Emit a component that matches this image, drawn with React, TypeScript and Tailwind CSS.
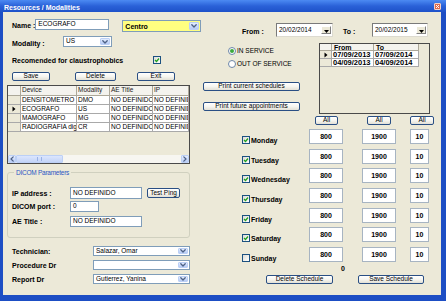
import React from "react";

type Kids = { className?: string; children?: React.ReactNode };

function Chev({ dir = "down" }: { dir?: "down" | "left" | "right" }) {
  if (dir === "down")
    return (
      <svg width="6" height="4" viewBox="0 0 6 4">
        <path d="M0.8 0.8 L3 3 L5.2 0.8" stroke="#4D6185" strokeWidth="1.3" fill="none" strokeLinecap="round" strokeLinejoin="round" />
      </svg>
    );
  const d = dir === "left" ? "M3.2 0.8 L1 3 L3.2 5.2" : "M0.8 0.8 L3 3 L0.8 5.2";
  return (
    <svg width="4" height="6" viewBox="0 0 4 6">
      <path d={d} stroke="#4D6185" strokeWidth="1.2" fill="none" strokeLinecap="round" strokeLinejoin="round" />
    </svg>
  );
}

function Lbl({ className = "", children }: Kids) {
  return <div className={`text-[7px] font-bold leading-none whitespace-nowrap ${className}`}>{children}</div>;
}

function Combo({ className = "", text = "", bold = false, yellow = false }: { className?: string; text?: string; bold?: boolean; yellow?: boolean }) {
  return (
    <div className={`flex border border-[#7F9DB9] ${yellow ? "bg-[#FFFF80]" : "bg-white"} ${className}`}>
      <div className={`flex-1 flex items-center pl-[2px] leading-none whitespace-nowrap overflow-hidden ${bold ? "font-bold text-[7px]" : "text-[6.5px]"}`}>
        {text}
      </div>
      <div className="w-[10px] my-[1px] mr-[1px] rounded-[1px] border border-[#BCD0F6] bg-gradient-to-b from-[#E4EDFE] to-[#B5CAF5] flex items-center justify-center">
        <Chev />
      </div>
    </div>
  );
}

function DateBox({ className = "", text }: { className?: string; text: string }) {
  return (
    <div className={`flex bg-white border border-t-[#7A7A7A] border-l-[#7A7A7A] border-r-[#DCDAD0] border-b-[#DCDAD0] ${className}`}>
      <div className="flex-1 pl-[2px] pt-[3px] text-[6.5px] leading-none whitespace-nowrap">{text}</div>
      <div className="w-[10px] my-[2px] mr-[1px] bg-[#ECE9D8] border border-t-white border-l-white border-r-[#808080] border-b-[#808080] flex items-center justify-center pt-[2px]">
        <svg width="5" height="3" viewBox="0 0 5 3">
          <path d="M0 0 H5 L2.5 3Z" fill="#000" />
        </svg>
      </div>
    </div>
  );
}

function Btn({ className = "", children }: Kids) {
  return (
    <div className={`flex items-center justify-center rounded-[2px] border border-[#2A4F84] bg-gradient-to-b from-white via-[#F6F5F0] to-[#E2E0D6] text-[6.5px] leading-none whitespace-nowrap ${className}`}>
      {children}
    </div>
  );
}

function Check({ checked }: { checked: boolean }) {
  return (
    <div className="w-[8px] h-[8px] shrink-0 border border-[#1C5180] bg-gradient-to-br from-[#DCDCD7] to-white flex items-center justify-center">
      {checked && (
        <svg width="6" height="6" viewBox="0 0 6 6">
          <path d="M1 3 L2.5 4.5 L5 1.5" stroke="#21A121" strokeWidth="1.3" fill="none" />
        </svg>
      )}
    </div>
  );
}

function Radio({ checked }: { checked: boolean }) {
  return (
    <div className="w-[8px] h-[8px] shrink-0 rounded-full border border-[#6D87A8] bg-white flex items-center justify-center">
      {checked && <div className="w-[4px] h-[4px] rounded-full bg-[#3DA93D]" />}
    </div>
  );
}

function Field({ className = "", children }: Kids) {
  return (
    <div className={`flex items-center bg-white border border-[#7F9DB9] pl-[2px] text-[6.5px] leading-none whitespace-nowrap overflow-hidden ${className}`}>
      {children}
    </div>
  );
}

function Arrow() {
  return (
    <svg width="4" height="6" viewBox="0 0 4 6">
      <path d="M0.5 0.5 L3.5 3 L0.5 5.5Z" fill="#000" />
    </svg>
  );
}

const devices = [
  ["DENSITOMETRO", "DMO", false],
  ["ECOGRAFO", "US", true],
  ["MAMOGRAFO", "MG", false],
  ["RADIOGRAFIA dig", "CR", false],
] as const;

function DeviceGrid() {
  const hc = "h-full flex items-center pl-[1px] border-r border-b border-[#ACA899] bg-[#F4F3EE] text-[6.5px] leading-none text-[#222] whitespace-nowrap overflow-hidden";
  const dc = "h-full flex items-center pl-[1px] border-r border-b border-[#A9A9A9] bg-white text-[6.5px] leading-none whitespace-nowrap overflow-hidden";
  return (
    <div className="mt-[4px] w-[183px] h-[79px] border border-[#4A4A4A] bg-[#ECE9D8] flex flex-col overflow-hidden">
      <div className="flex h-[10px]">
        <div className={`${hc} w-[13px]`} />
        <div className={`${hc} w-[56px]`}>Device</div>
        <div className={`${hc} w-[33px]`}>Modality</div>
        <div className={`${hc} w-[43px]`}>AE Title</div>
        <div className={`${hc} flex-1`}>IP</div>
      </div>
      {devices.map(([d, m, cur]) => (
        <div key={d} className="flex h-[9px]">
          <div className="w-[13px] h-full flex items-center justify-center border-r border-b border-[#A9A9A9] bg-[#ECE9D8]">{cur && <Arrow />}</div>
          <div className={`${dc} w-[56px]`}>{d}</div>
          <div className={`${dc} w-[33px]`}>{m}</div>
          <div className={`${dc} w-[43px]`}>NO DEFINIDO</div>
          <div className={`${dc} flex-1`}>NO DEFINIDO</div>
        </div>
      ))}
      <div className="flex-1" />
      <div className="flex h-[8px] bg-[#F7F6F1]">
        <div className="w-[8px] h-full rounded-[1px] border border-[#BCD0F6] bg-gradient-to-b from-[#E4EDFE] to-[#BACDF6] flex items-center justify-center">
          <Chev dir="left" />
        </div>
        <div className="w-[47px] h-full rounded-[1px] border border-[#BCD0F6] bg-gradient-to-b from-[#DCE6FD] to-[#C3D4F8] flex items-center justify-center">
          <div className="w-[5px] h-[4px] border-l border-r border-[#9AB2E6]" />
        </div>
        <div className="flex-1" />
        <div className="w-[8px] h-full rounded-[1px] border border-[#BCD0F6] bg-gradient-to-b from-[#E4EDFE] to-[#BACDF6] flex items-center justify-center">
          <Chev dir="right" />
        </div>
      </div>
    </div>
  );
}

function ScheduleGrid() {
  const hc = "h-full flex items-center pl-[2px] border-r border-b border-[#ACA899] bg-[#F4F3EE] text-[7px] font-bold leading-none";
  const dc = "h-full flex items-center pl-[1px] border-r border-b border-[#A9A9A9] bg-white text-[7.5px] font-bold leading-none whitespace-nowrap";
  const rows = [
    ["07/09/2013", "07/09/2014", true],
    ["04/09/2013", "04/09/2014", false],
  ] as const;
  return (
    <div className="w-[111px] h-[71px] border border-[#4A4A4A] bg-[#ECE9D8] flex flex-col overflow-hidden">
      <div className="flex h-[7px]">
        <div className={`${hc} w-[12px]`} />
        <div className={`${hc} w-[42px]`}>From</div>
        <div className={`${hc} w-[45px]`}>To</div>
      </div>
      {rows.map(([a, b, cur]) => (
        <div key={a} className="flex h-[8px]">
          <div className="w-[12px] h-full flex items-center justify-center border-r border-b border-[#A9A9A9] bg-[#ECE9D8]">{cur && <Arrow />}</div>
          <div className={`${dc} w-[42px]`}>{a}</div>
          <div className={`${dc} w-[45px]`}>{b}</div>
        </div>
      ))}
    </div>
  );
}

function LeftCol() {
  return (
    <div className="w-[187px] pl-[4px] flex flex-col shrink-0">
      {/* Name */}
      <div className="mt-[7px] h-[12px] flex items-start">
        <Lbl className="w-[56px] h-[11px] pl-[5px] pt-[1px] flex items-center">Name :</Lbl>
        <Field className="w-[74px] h-[11px] shrink-0">ECOGRAFO</Field>
        <Combo className="ml-[13px] mt-[1px] w-[79px] h-[12px] shrink-0" text="Centro" bold yellow />
      </div>
      {/* Modality */}
      <div className="mt-[5px] h-[11px] flex items-center">
        <Lbl className="w-[56px] pl-[5px] pt-[3px]">Modality :</Lbl>
        <Combo className="w-[49px] h-[11px]" text="US" />
      </div>
      {/* Claustro */}
      <div className="mt-[9px] h-[8px] flex items-center">
        <Lbl className="w-[146px] pl-[5px] pt-[1px]">Recomended for claustrophobics</Lbl>
        <Check checked />
      </div>
      {/* buttons */}
      <div className="mt-[8px] h-[9px] flex">
        <Btn className="ml-[5px] w-[38px] h-full">Save</Btn>
        <Btn className="ml-[25px] w-[41px] h-full">Delete</Btn>
        <Btn className="ml-[21px] w-[38px] h-full">Exit</Btn>
      </div>
      <DeviceGrid />
      {/* DICOM */}
      <fieldset className="mt-[5px] w-[183px] h-[69px] border border-[#D0D0BF] rounded-[3px]">
        <legend className="ml-[6px] px-[2px] text-[6.5px] tracking-[-0.25px] leading-[7px] text-[#2B55C4]">DICOM Parameters</legend>
        <div className="mt-[11px] h-[12px] flex items-center">
          <Lbl className="w-[62px] pl-[4px]">IP address :</Lbl>
          <Field className="w-[72px] h-[12px]">NO DEFINIDO</Field>
          <Btn className="ml-[5px] w-[33px] h-[10px]">Test Ping</Btn>
        </div>
        <div className="mt-[2px] h-[11px] flex items-center">
          <Lbl className="w-[62px] pl-[4px]">DICOM port :</Lbl>
          <Field className="w-[29px] h-[11px]">0</Field>
        </div>
        <div className="mt-[4px] h-[11px] flex items-center">
          <Lbl className="w-[62px] pl-[4px]">AE Title :</Lbl>
          <Field className="w-[72px] h-[11px]">NO DEFINIDO</Field>
        </div>
      </fieldset>
      {/* doctors */}
      <div className="mt-[8px] flex flex-col gap-[4px]">
        <div className="h-[10px] flex items-center">
          <Lbl className="w-[86px] pl-[5px]">Technician:</Lbl>
          <Combo className="w-[97px] h-[10px]" text="Salazar, Omar" />
        </div>
        <div className="h-[10px] flex items-center">
          <Lbl className="w-[86px] pl-[5px]">Procedure Dr</Lbl>
          <Combo className="w-[97px] h-[10px]" text="" />
        </div>
        <div className="h-[10px] flex items-center">
          <Lbl className="w-[86px] pl-[5px]">Report Dr</Lbl>
          <Combo className="w-[97px] h-[10px]" text="Gutierrez, Yanina" />
        </div>
      </div>
    </div>
  );
}

const days: [string, boolean][] = [
  ["Monday", true],
  ["Tuesday", true],
  ["Wednesday", true],
  ["Thursday", true],
  ["Friday", true],
  ["Saturday", true],
  ["Sunday", false],
];

function NumBox({ className = "", children }: Kids) {
  return (
    <div className={`h-[15px] bg-white border border-[#A7B4C2] flex justify-center pt-[3px] text-[7px] font-bold leading-none ${className}`}>
      {children}
    </div>
  );
}

function RightCol() {
  return (
    <div className="w-[251px] flex flex-col shrink-0">
      {/* dates */}
      <div className="mt-[11px] h-[14px] flex items-center">
        <Lbl className="ml-[52px] w-[34px] pt-[2px]">From :</Lbl>
        <DateBox className="w-[57px] h-[14px]" text="20/02/2014" />
        <Lbl className="ml-[10px] w-[29px] pt-[2px]">To :</Lbl>
        <DateBox className="w-[56px] h-[14px]" text="20/02/2015" />
      </div>
      {/* middle */}
      <div className="mt-[6px] h-[71px] flex">
        <div className="w-[129px] flex flex-col">
          <div className="mt-[4px] ml-[38px] h-[8px] flex items-center gap-[1px]">
            <Radio checked />
            <span className="text-[6.5px] leading-none">IN SERVICE</span>
          </div>
          <div className="mt-[5px] ml-[38px] h-[8px] flex items-center gap-[1px]">
            <Radio checked={false} />
            <span className="text-[6.5px] leading-none">OUT OF SERVICE</span>
          </div>
          <Btn className="mt-[14px] ml-[13px] w-[97px] h-[9px]">Print current schedules</Btn>
          <Btn className="mt-[11px] ml-[13px] w-[97px] h-[9px]">Print future appointments</Btn>
        </div>
        <ScheduleGrid />
      </div>
      {/* All */}
      <div className="mt-[2px] h-[9px] flex">
        <Btn className="ml-[125px] w-[23px] h-full">All</Btn>
        <Btn className="ml-[29px] w-[24px] h-full">All</Btn>
        <Btn className="ml-[19px] w-[24px] h-full">All</Btn>
      </div>
      {/* days */}
      <div className="mt-[4px] flex flex-col gap-[4.67px]">
        {days.map(([d, c]) => (
          <div key={d} className="h-[15px] flex items-start">
            <div className="ml-[52px] w-[67px] mt-[7px] flex items-center gap-[1px]">
              <Check checked={c} />
              <Lbl className="pt-[1px]">{d}</Lbl>
            </div>
            <NumBox className="w-[34px]">800</NumBox>
            <NumBox className="ml-[19px] w-[34px]">1900</NumBox>
            <NumBox className="ml-[14px] w-[19px]">10</NumBox>
          </div>
        ))}
      </div>
      <div className="mt-[1px] h-[11px] flex items-center">
        <Lbl className="ml-[151px]">0</Lbl>
      </div>
      <div className="mt-[1px] h-[9px] flex">
        <Btn className="ml-[76px] w-[67px] h-full">Delete Schedule</Btn>
        <Btn className="ml-[25px] w-[66px] h-full">Save Schedule</Btn>
      </div>
    </div>
  );
}

export default function App() {
  return (
    <div className="w-[446px] h-[301px] bg-[#1D4EC4] flex flex-col font-['Liberation_Sans',Arial,sans-serif] text-black overflow-hidden">
      <div className="h-[12px] shrink-0 flex items-center justify-between bg-gradient-to-b from-[#4C8AF2] via-[#2A61D8] to-[#1E52C9] pl-[4px] pr-[5px]">
        <span className="text-white font-bold text-[7px] leading-none pt-[2px]">Resources / Modalities</span>
        <div className="w-[7px] h-[7px] rounded-[1px] border border-[#F4D0C4] bg-[#DD6A4E] flex items-center justify-center">
          <svg width="5" height="5" viewBox="0 0 5 5">
            <path d="M1 1 L4 4 M4 1 L1 4" stroke="#fff" strokeWidth="1" />
          </svg>
        </div>
      </div>
      <div className="flex-1 ml-[3px] mr-[5px] mb-[6px] bg-[#ECE9D8] flex">
        <LeftCol />
        <RightCol />
      </div>
    </div>
  );
}
